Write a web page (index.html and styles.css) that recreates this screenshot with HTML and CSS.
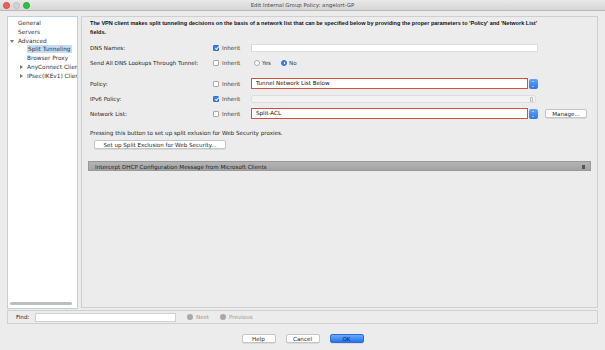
FILE: index.html
```html
<!DOCTYPE html>
<html>
<head>
<meta charset="utf-8">
<link rel="stylesheet" href="styles.css">
</head>
<body>
<div class="window">
  <div class="titlebar">
    <div class="lights"><span class="light red"></span><span class="light yellow"></span><span class="light green"></span></div>
    <div class="title">Edit Internal Group Policy: angelort-GP</div>
    <div></div>
  </div>
  <div class="main">
    <div class="tree">
      <div class="tree-items">
        <div class="ti l1">General</div>
        <div class="ti l1">Servers</div>
        <div class="ti l0"><span class="arrow down"></span>Advanced</div>
        <div class="ti l2"><span class="sel">Split Tunneling</span></div>
        <div class="ti l2">Browser Proxy</div>
        <div class="ti l1b"><span class="arrow right"></span>AnyConnect Client</div>
        <div class="ti l1b"><span class="arrow right"></span>IPsec(IKEv1) Client</div>
      </div>
      <div class="hscroll"></div>
    </div>
    <div class="panel">
      <p class="desc">The VPN client makes split tunneling decisions on the basis of a network list that can be specified below by providing the proper parameters to 'Policy' and 'Network List' fields.</p>
      <div class="row r-dns">
        <span class="lbl">DNS Names:</span>
        <span class="inh"><span class="cb on"></span>Inherit</span>
        <span class="field text"></span>
      </div>
      <div class="row r-send">
        <span class="lbl">Send All DNS Lookups Through Tunnel:</span>
        <span class="inh"><span class="cb"></span>Inherit</span>
        <span class="radios"><span class="rb"></span>Yes<span class="rb on"></span>No</span>
      </div>
      <div class="row r-policy">
        <span class="lbl">Policy:</span>
        <span class="inh"><span class="cb"></span>Inherit</span>
        <span class="combo"><span class="field red">Tunnel Network List Below</span><span class="step"></span></span>
      </div>
      <div class="row r-ipv6">
        <span class="lbl">IPv6 Policy:</span>
        <span class="inh"><span class="cb on"></span>Inherit</span>
        <span class="field disabled"><span class="step-dis"></span></span>
      </div>
      <div class="row r-net">
        <span class="lbl">Network List:</span>
        <span class="inh"><span class="cb"></span>Inherit</span>
        <span class="combo"><span class="field red">Split-ACL</span><span class="step"></span></span>
        <span class="btn manage">Manage...</span>
      </div>
      <p class="press">Pressing this button to set up split exlusion for Web Security proxies.</p>
      <span class="btn setup">Set up Split Exclusion for Web Security...</span>
      <div class="bar">Intercept DHCP Configuration Message from Microsoft Clients<span class="bar-icon"></span></div>
    </div>
  </div>
  <div class="findbar">
    <span class="find-lbl">Find:</span>
    <span class="find-input"></span>
    <span class="nav"><span class="dot"></span>Next</span>
    <span class="nav"><span class="dot"></span>Previous</span>
  </div>
  <div class="actions">
    <span class="btn act">Help</span>
    <span class="btn act">Cancel</span>
    <span class="btn act ok">OK</span>
  </div>
</div>
</body>
</html>
```
FILE: styles.css
```css
* { box-sizing: border-box; }
html, body { margin: 0; padding: 0; }
body {
  width: 605px; height: 350px; overflow: hidden;
  background: #ececec;
  font-family: "DejaVu Sans", sans-serif;
  font-size: 5.6px;
  color: #1e1e1e;
}
.window { width: 605px; height: 350px; display: flex; flex-direction: column; }
.titlebar {
  height: 11px;
  display: grid; grid-template-columns: 1fr auto 1fr; align-items: center;
  background: linear-gradient(#e9e9e9, #d6d6d6);
  border-bottom: 1px solid #b8b8b8;
}
.lights { display: flex; gap: 3px; padding-left: 3px; }
.light { width: 7px; height: 7px; border-radius: 50%; display: block; }
.light.red { background: #f65f58; border: 0.5px solid #d9453e; }
.light.yellow { background: #d3d3d3; border: 0.5px solid #bdbdbd; }
.light.green { background: #2bc740; border: 0.5px solid #1da632; }
.title { color: #4a4a4a; font-size: 5.4px; }

.main { display: flex; gap: 3px; padding: 5px 7px 0 7px; height: 297px; }
.tree {
  width: 71px; height: 293px;
  background: #fff; border: 1px solid #b9d3e6;
  display: flex; flex-direction: column; justify-content: space-between;
  padding: 2px 0 3px 0;
}
.ti { height: 8.8px; line-height: 8.8px; white-space: nowrap; overflow: hidden; font-size: 5.8px; color: #333; }
.ti.l0 { padding-left: 2px; }
.ti.l1 { padding-left: 10px; }
.ti.l1b { padding-left: 12px; }
.ti.l2 { padding-left: 19px; }
.sel { background: #c6dcf5; padding: 0 1px; display: inline-block; line-height: 8px; }
.arrow { display: inline-block; width: 0; height: 0; margin-right: 4px; vertical-align: middle; }
.arrow.down { border-left: 2px solid transparent; border-right: 2px solid transparent; border-top: 3px solid #777; }
.arrow.right { border-top: 2px solid transparent; border-bottom: 2px solid transparent; border-left: 3px solid #777; }
.hscroll { height: 3px; margin: 0 5px 0 2px; background: #bdbdbd; border-radius: 2px; }

.panel {
  flex: 1; height: 292px;
  border: 1px solid #cfcfcf; background: #ececec;
  padding: 2px 0 0 8px;
  display: flex; flex-direction: column; align-items: flex-start;
}
.desc { margin: 0; width: 452px; line-height: 9px; color: #111; font-family: "Liberation Sans", sans-serif; font-size: 5.55px; font-weight: bold; }
.row { display: flex; align-items: center; height: 15px; }
.r-dns { margin-top: 3px; }
.r-policy { margin-top: 6px; }
.lbl { width: 123px; }
.inh { width: 38px; display: flex; align-items: center; color: #3a3a3a; }
.cb { width: 6px; height: 6px; border: 0.6px solid #aaa; border-radius: 1px; background: #fff; margin-right: 3px; display: inline-block; position: relative; }
.cb.on { background: #3b86f2; border-color: #2e6fd0; }
.cb.on::after { content: ""; position: absolute; left: 1.6px; top: 0.4px; width: 1.4px; height: 3px; border: solid #fff; border-width: 0 1px 1px 0; transform: rotate(40deg); }
.field { display: block; height: 8px; background: #fff; }
.field.text { width: 287px; border: 0.5px solid #dcdcdc; }
.radios { display: flex; align-items: center; color: #3a3a3a; }
.rb { width: 6px; height: 6px; border-radius: 50%; border: 0.6px solid #aaa; background: #fff; display: inline-block; margin-right: 2px; }
.rb:first-child { margin-left: 3px; }
.rb.on { background: #3b86f2; border-color: #2e6fd0; margin-left: 10px; position: relative; }
.rb.on::after { content: ""; position: absolute; left: 1.7px; top: 1.7px; width: 1.6px; height: 1.6px; border-radius: 50%; background: #fff; }
.combo { display: flex; align-items: center; }
.field.red { width: 277px; height: 11px; border: 1px solid #d6503f; padding-left: 4px; line-height: 9px; color: #111; }
.step { width: 9px; height: 10px; margin-left: 1px; border-radius: 2px; background: linear-gradient(#62a4f8, #2a78ee); position: relative; }
.step::before, .step::after { content: ""; position: absolute; left: 3px; border-left: 1.5px solid transparent; border-right: 1.5px solid transparent; }
.step::before { top: 2px; border-bottom: 1.6px solid #fff; }
.step::after { bottom: 2px; border-top: 1.6px solid #fff; }
.field.disabled { width: 285px; height: 8px; background: #f2f2f2; border: 0.5px solid #dedede; border-radius: 2px; position: relative; }
.step-dis { position: absolute; right: 2px; top: 1px; width: 3px; height: 5px; border: 0.5px solid #bbb; border-radius: 1px; }
.btn { display: inline-flex; align-items: center; justify-content: center; background: #fff; border: 0.5px solid #c6c6c6; border-radius: 2px; box-shadow: 0 0.5px 0.5px rgba(0,0,0,0.15); color: #1e1e1e; }
.btn.manage { width: 42px; height: 9px; margin-left: 7px; }
.press { margin: 8px 0 0 0; line-height: 9px; }
.btn.setup { width: 132px; height: 9px; margin: 2px 0 0 4px; }
.bar {
  margin: 12px 0 0 -2px; width: 503px; height: 10px; line-height: 10px;
  background: linear-gradient(#b4b4b4, #a3a3a3); border: 0.5px solid #999;
  padding-left: 6px; color: #222; position: relative;
}
.bar-icon { position: absolute; right: 5px; top: 3px; width: 3px; height: 4px; background: #555; }

.findbar {
  margin: 2px 7px 0 7px; height: 14px;
  border: 1px solid #d0d0d0; display: flex; align-items: center; padding-left: 8px;
}
.find-lbl { width: 19px; }
.find-input { width: 141px; height: 9px; background: #fff; border: 0.5px solid #d0d0d0; margin-right: 11px; }
.nav { display: flex; align-items: center; color: #999; margin-right: 11px; }
.dot { width: 6px; height: 6px; border-radius: 50%; background: #a8a8a8; margin-right: 3px; }
.actions { display: flex; justify-content: center; gap: 10px; margin-top: 10px; padding-left: 0; }
.btn.act { width: 34px; height: 9px; }
.btn.ok { background: linear-gradient(#6aaaf9, #2474ef); border-color: #2a6fd8; color: #10204a; }
```
